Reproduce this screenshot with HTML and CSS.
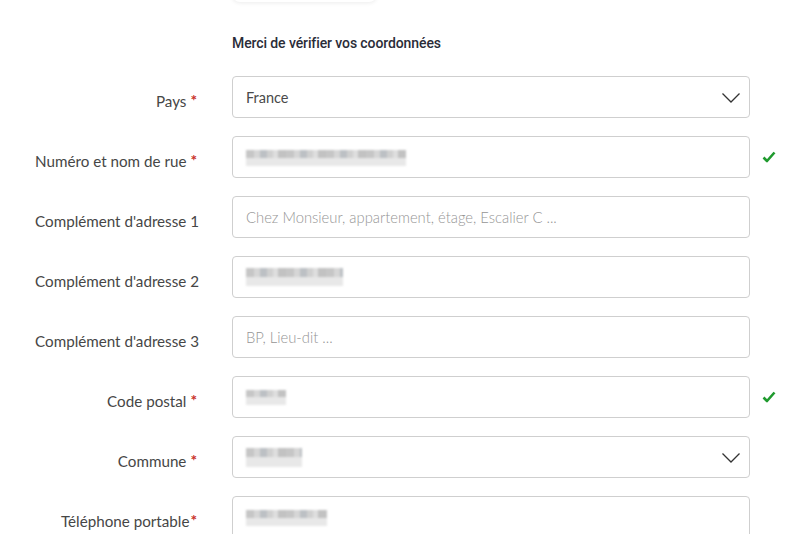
FILE: index.html
```html
<!DOCTYPE html>
<html lang="fr">
<head>
<meta charset="utf-8">
<link rel="stylesheet" href="styles.css">
</head>
<body>
<div class="page">
  <div class="topcard"></div>
  <h2 class="title">Merci de vérifier vos coordonnées</h2>
  <form class="form">
    <label class="lbl">Pays<span class="req">*</span></label>
    <div class="field select"><span class="val">France</span>
      <svg class="chev" width="20" height="12" viewBox="0 0 20 12"><path d="M1.5 1.5 L10 10 L18.5 1.5" fill="none" stroke="#333" stroke-width="1.3"/></svg>
    </div>
    <div class="ok"></div>

    <label class="lbl">Numéro et nom de rue<span class="req">*</span></label>
    <div class="field"><span class="mosaic m1"></span></div>
    <div class="ok"><svg width="14" height="12" viewBox="0 0 14 12"><path d="M1.5 6.5 L5 10 L12.5 1.5" fill="none" stroke="#1f9a2e" stroke-width="2.6" stroke-linejoin="round"/></svg></div>

    <label class="lbl">Complément d'adresse 1</label>
    <div class="field"><span class="ph">Chez Monsieur, appartement, étage, Escalier C ...</span></div>
    <div class="ok"></div>

    <label class="lbl">Complément d'adresse 2</label>
    <div class="field"><span class="mosaic m2"></span></div>
    <div class="ok"></div>

    <label class="lbl">Complément d'adresse 3</label>
    <div class="field"><span class="ph">BP, Lieu-dit ...</span></div>
    <div class="ok"></div>

    <label class="lbl">Code postal<span class="req">*</span></label>
    <div class="field"><span class="mosaic m3"></span></div>
    <div class="ok"><svg width="14" height="12" viewBox="0 0 14 12"><path d="M1.5 6.5 L5 10 L12.5 1.5" fill="none" stroke="#1f9a2e" stroke-width="2.6" stroke-linejoin="round"/></svg></div>

    <label class="lbl">Commune<span class="req">*</span></label>
    <div class="field select"><span class="mosaic m4"></span>
      <svg class="chev" width="20" height="12" viewBox="0 0 20 12"><path d="M1.5 1.5 L10 10 L18.5 1.5" fill="none" stroke="#333" stroke-width="1.3"/></svg>
    </div>
    <div class="ok"></div>

    <label class="lbl">Téléphone portable<span class="req tight">*</span></label>
    <div class="field"><span class="mosaic m5"></span></div>
    <div class="ok"></div>
  </form>
</div>
</body>
</html>
```
FILE: styles.css
```css
html, body {
  margin: 0;
  padding: 0;
  background: #fff;
}
body {
  font-family: "Lato", "Open Sans", sans-serif;
  color: #454545;
  overflow: hidden;
}
.page {
  width: 810px;
  height: 554px;
}
.topcard {
  margin: -20px 0 0 232px;
  width: 145px;
  height: 22px;
  border-radius: 8px;
  box-shadow: 0 1px 4px rgba(0,0,0,0.08);
  background: #fff;
}
.title {
  margin: 31px 0 0 232px;
  font-family: "Roboto", sans-serif;
  font-weight: 500;
  font-size: 14px;
  line-height: 20px;
  color: #2a2c38;
  letter-spacing: -0.1px;
}
.form {
  margin-top: 23px;
  display: grid;
  grid-template-columns: 200px 518px 40px;
  column-gap: 32px;
  grid-auto-rows: 42px;
  row-gap: 18px;
}
.form .ok:nth-child(3n) { margin-left: -20px; }
.lbl {
  display: flex;
  justify-content: flex-end;
  align-items: center;
  padding-top: 7px;
  font-size: 15.2px;
  color: #464646;
  white-space: nowrap;
}
.lbl:not(:has(.req)) { margin-right: 1px; }
.req {
  color: #c8302a;
  margin-left: 4px;
  margin-right: 3px;
  font-size: 15.5px;
  font-weight: 700;
  position: relative;
  top: -1px;
}
.req.tight { margin-left: 1px; }
.field {
  box-sizing: border-box;
  border: 1px solid #cfcfcf;
  border-radius: 4px;
  display: flex;
  align-items: center;
  padding: 0 13px;
  background: #fff;
}
.select { justify-content: space-between; padding-right: 8px; }
.val {
  font-size: 14.5px;
  color: #4a4a4a;
  font-weight: 400;
}
.ph {
  font-size: 14.8px;
  font-weight: 300;
  color: #959595;
}
.chev { display: block; margin-top: 1px; }
.ok {
  display: flex;
  align-items: center;
}
.mosaic {
  display: block;
  height: 16px;
  filter: blur(1px);
  background:
    linear-gradient(#fff0 0 50%, #e8e8e8 50% 100%),
    repeating-linear-gradient(90deg, #c6c6c6 0 8px, #d6d6d6 8px 14px, #bcc0c4 14px 21px, #d0d0d0 21px 27px, #dedede 27px 32px, #c2c2c2 32px 40px);
}
.m1 { width: 160px; margin-top: 1px; }
.m2 { width: 97px; height: 18px; }
.m3 { width: 40px; height: 15px; }
.m4 { width: 56px; height: 19px; margin-right: auto; }
.m5 { width: 81px; height: 16px; margin-top: 2px; }
```
